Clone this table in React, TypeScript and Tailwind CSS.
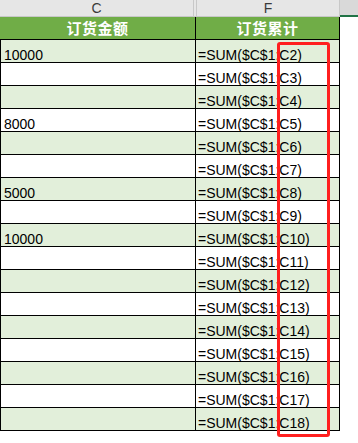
import React from "react";

const rows: { c: string; f: string }[] = Array.from({ length: 17 }, (_, i) => {
  const n = i + 2;
  const vals: Record<number, string> = { 2: "10000", 5: "8000", 8: "5000", 10: "10000" };
  return { c: vals[n] ?? "", f: `=SUM($C$1:C${n})` };
});

export default function App() {
  return (
    <div
      className="relative w-[358px] h-[443px] bg-white overflow-hidden text-black"
      style={{ fontFamily: '"Liberation Sans", Arial, "Noto Sans CJK SC", sans-serif' }}
    >
      {/* column letters */}
      <div className="flex h-[17px] text-[14px] leading-[14px] text-[#3a3a3a]">
        <div className="w-[194px] bg-[#e6e6e6] border-r border-b border-[#c8c8c8] flex items-end justify-center pb-[1px]">
          C
        </div>
        <div className="w-[3px] bg-[#e6e6e6] border-r border-b border-[#c8c8c8]" />
        <div className="w-[143px] bg-[#e6e6e6] border-r border-b border-[#c8c8c8] flex items-end justify-center pb-[1px]">
          F
        </div>
        <div className="flex-1 bg-[#d9d9d9] border-b-2 border-[#217346]" />
      </div>

      {/* green header row */}
      <div className="flex h-[23px] w-[340px] bg-[#70ad47] border-b border-black text-white font-bold text-[15px] leading-[16px]">
        <div className="w-[196px] border-r border-black flex items-end justify-center pb-[2px] tracking-[0.5px]">
          订货金额
        </div>
        <div className="w-[144px] border-r border-black flex items-end justify-center pb-[2px] tracking-[0.5px]">
          订货累计
        </div>
      </div>

      {/* data rows */}
      {rows.map((r, i) => (
        <div
          key={i}
          className={`flex h-[23px] w-[340px] border-b border-black text-[14px] leading-[14px] ${
            i % 2 === 0 ? "bg-[#e2efda]" : "bg-white"
          }`}
        >
          <div className="w-[196px] border-l border-r border-black flex items-end pl-[3px]">
            {r.c}
          </div>
          <div className="w-[144px] border-r border-black flex items-end pl-[2px] whitespace-nowrap">
            {r.f}
          </div>
        </div>
      ))}

      {/* red highlight box */}
      <div className="absolute left-[277px] top-[42px] w-[53px] h-[395px] border-[3px] border-[#ff1f1f] rounded-[3px]" />
    </div>
  );
}
